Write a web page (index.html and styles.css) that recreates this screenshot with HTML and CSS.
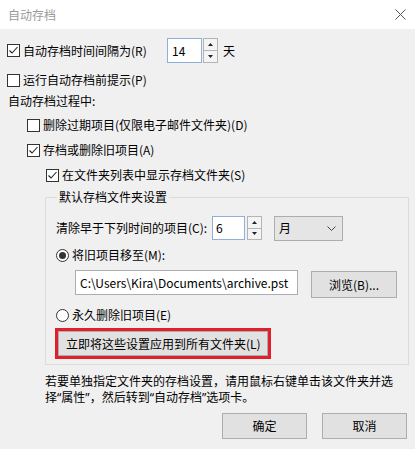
FILE: index.html
```html
<!DOCTYPE html>
<html lang="zh-CN">
<head>
<meta charset="utf-8">
<title>自动存档</title>
<link rel="stylesheet" href="styles.css">
</head>
<body>
<div class="win">
  <div class="titlebar">
    <span class="title">自动存档</span>
    <svg class="close" width="11" height="11" viewBox="0 0 11 11"><path d="M0.5 0.5 L10.5 10.5 M10.5 0.5 L0.5 10.5" stroke="#555" stroke-width="1" fill="none"/></svg>
  </div>
  <div class="body">
    <div class="row r1">
      <div class="chk w144"><span class="cb"><svg width="11" height="11" viewBox="0 0 11 11"><path d="M1.5 5.5 L4 8 L9.5 2" stroke="#222" stroke-width="1.1" fill="none"/></svg></span><span>自动存档时间间隔为(R)</span></div>
      <span class="num n1">14</span>
      <span class="spin"><span class="sb"><svg width="5" height="3" viewBox="0 0 5 3"><path d="M0 3 L2.5 0 L5 3Z" fill="#222"/></svg></span><span class="sb"><svg width="5" height="3" viewBox="0 0 5 3"><path d="M0 0 L2.5 3 L5 0Z" fill="#222"/></svg></span></span>
      <span class="unit">天</span>
    </div>
    <div class="row r2">
      <div class="chk"><span class="cb"></span><span>运行自动存档前提示(P)</span></div>
    </div>
    <div class="row r3">自动存档过程中:</div>
    <div class="row r4">
      <div class="chk"><span class="cb"></span><span>删除过期项目(仅限电子邮件文件夹)(D)</span></div>
    </div>
    <div class="row r5">
      <div class="chk"><span class="cb"><svg width="11" height="11" viewBox="0 0 11 11"><path d="M1.5 5.5 L4 8 L9.5 2" stroke="#222" stroke-width="1.1" fill="none"/></svg></span><span>存档或删除旧项目(A)</span></div>
    </div>
    <div class="row r6">
      <div class="chk"><span class="cb"><svg width="11" height="11" viewBox="0 0 11 11"><path d="M1.5 5.5 L4 8 L9.5 2" stroke="#222" stroke-width="1.1" fill="none"/></svg></span><span>在文件夹列表中显示存档文件夹(S)</span></div>
    </div>
    <fieldset class="group">
      <legend>默认存档文件夹设置</legend>
      <div class="row rc">
        <span class="w156">清除早于下列时间的项目(C):</span>
        <span class="num n2">6</span>
        <span class="spin"><span class="sb"><svg width="5" height="3" viewBox="0 0 5 3"><path d="M0 3 L2.5 0 L5 3Z" fill="#222"/></svg></span><span class="sb"><svg width="5" height="3" viewBox="0 0 5 3"><path d="M0 0 L2.5 3 L5 0Z" fill="#222"/></svg></span></span>
        <span class="combo"><span>月</span><svg width="9" height="5" viewBox="0 0 9 5"><path d="M0.5 0.5 L4.5 4.5 L8.5 0.5" stroke="#444" stroke-width="1" fill="none"/></svg></span>
      </div>
      <div class="row rm">
        <div class="chk"><span class="rb on"></span><span>将旧项目移至(M):</span></div>
      </div>
      <div class="row rp">
        <span class="path">C:\Users\Kira\Documents\archive.pst</span>
        <span class="btn browse">浏览(B)...</span>
      </div>
      <div class="row re">
        <div class="chk"><span class="rb"></span><span>永久删除旧项目(E)</span></div>
      </div>
      <div class="apply"><span class="btn applybtn">立即将这些设置应用到所有文件夹(L)</span></div>
    </fieldset>
    <p class="note">若要单独指定文件夹的存档设置，请用鼠标右键单击该文件夹并选<br>择<span class="q">“</span>属性<span class="q">”</span>，然后转到<span class="q">“</span>自动存档<span class="q">”</span>选项卡。</p>
    <div class="actions">
      <span class="btn act">确定</span>
      <span class="btn act">取消</span>
    </div>
  </div>
</div>
</body>
</html>
```

FILE: styles.css
```css
html, body {
  margin: 0;
  padding: 0;
}
body {
  width: 415px;
  height: 449px;
  overflow: hidden;
  font-family: "Noto Sans CJK SC", "Noto Sans", sans-serif;
  font-size: 12px;
  line-height: 16px;
  color: #000;
}
.win {
  width: 415px;
  height: 449px;
  display: flex;
  flex-direction: column;
}
.titlebar {
  height: 29px;
  flex: none;
  background: #fff;
  display: flex;
  align-items: center;
  justify-content: space-between;
  padding: 0 9px 0 8px;
}
.title {
  color: #9a9a9a;
}
.body {
  flex: 1;
  background: #f0f0f0;
  padding: 9px 0 0 7px;
  box-sizing: border-box;
}
.row {
  display: flex;
  align-items: center;
  height: 16px;
}
.chk {
  display: flex;
  align-items: center;
}
.cb {
  width: 13px;
  height: 13px;
  box-sizing: border-box;
  border: 1px solid #333;
  background: #fff;
  margin-right: 3px;
  display: flex;
  flex: none;
}
.rb {
  width: 13px;
  height: 13px;
  box-sizing: border-box;
  border: 1px solid #333;
  border-radius: 50%;
  background: #fff;
  margin-right: 3px;
  display: flex;
  align-items: center;
  justify-content: center;
  flex: none;
}
.rb.on::after {
  content: "";
  width: 7px;
  height: 7px;
  border-radius: 50%;
  background: #333;
}
.w144 { width: 160px; }
.r1 { height: 25px; }
.r2 { margin-top: 9px; }
.r3 { margin-top: 5px; padding-left: 1px; }
.r4 { margin-top: 8px; padding-left: 20px; }
.r5 { margin-top: 9px; padding-left: 20px; }
.r6 { margin-top: 9px; padding-left: 39px; }
.num {
  box-sizing: border-box;
  background: #fff;
  height: 25px;
  display: flex;
  align-items: center;
  padding-left: 4px;
}
.n1 {
  width: 35px;
  border: 1px solid #8fb0dc;
}
.n2 {
  width: 33px;
  height: 24px;
  padding-left: 3px;
  border: 1px solid #8fb0dc;
}
.spin {
  margin-left: 1px;
  width: 15px;
  height: 25px;
  display: flex;
  flex-direction: column;
  box-sizing: border-box;
  border: 1px solid #b4b4b4;
  background: #f4f4f4;
}
.rc .spin { margin-left: 2px; height: 24px; }
.sb {
  flex: 1;
  display: flex;
  align-items: center;
  justify-content: center;
}
.sb + .sb {
  border-top: 1px solid #b4b4b4;
}
.unit { margin-left: 5px; }
.group {
  margin: 6px 0 0 38px;
  width: 364px;
  box-sizing: border-box;
  border: 1px solid #dcdcdc;
  padding: 0 0 5px 10px;
  min-width: 0;
}
.group legend {
  padding: 0 2px;
  margin-left: 1px;
  line-height: 16px;
}
.rc { margin-top: 11px; height: 24px; }
.w156 { width: 156px; }
.combo {
  margin-left: 12px;
  width: 69px;
  height: 25px;
  box-sizing: border-box;
  border: 1px solid #adadad;
  background: #e5e5e5;
  display: flex;
  align-items: center;
  justify-content: space-between;
  padding: 0 6px 0 4px;
}
.rm { margin-top: 7px; }
.rp {
  margin-top: 7px;
  height: 28px;
  align-items: flex-start;
  padding-left: 19px;
}
.path {
  width: 223px;
  height: 25px;
  box-sizing: border-box;
  border: 1px solid #7a7a7a;
  border-color: #abadb3;
  background: #fff;
  display: flex;
  align-items: center;
  padding-left: 4px;
  white-space: nowrap;
}
.btn {
  box-sizing: border-box;
  border: 1px solid #adadad;
  background: #e1e1e1;
  display: flex;
  align-items: center;
  justify-content: center;
}
.browse {
  margin-left: 13px;
  margin-top: 1px;
  width: 86px;
  height: 27px;
}
.re { margin-top: 9px; }
.apply {
  margin-top: 5px;
  margin-left: -1px;
  width: 216px;
  height: 31px;
  box-sizing: border-box;
  border: 3px solid #e0202c;
  display: flex;
}
.applybtn {
  flex: 1;
  justify-content: flex-start;
  padding-left: 7px;
}
.note {
  margin: 8px 0 0 38px;
  line-height: 16px;
  white-space: nowrap;
}
.q {
  font-family: "Noto Sans", sans-serif;
}
.actions {
  margin-top: 7px;
  display: flex;
  justify-content: flex-end;
  gap: 15px;
  padding-right: 8px;
}
.act {
  width: 85px;
  height: 26px;
}
```
